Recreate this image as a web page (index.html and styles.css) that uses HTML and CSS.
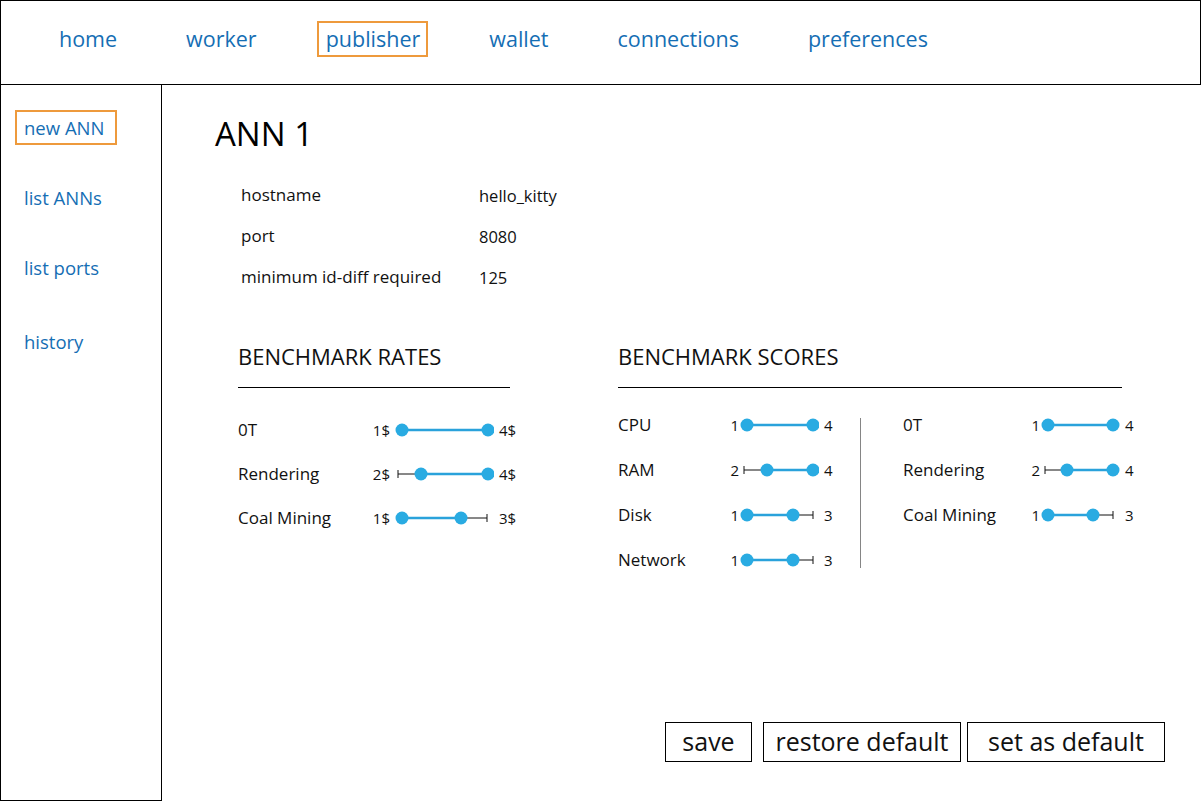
FILE: index.html
```html
<!DOCTYPE html>
<html lang="en">
<head>
<meta charset="utf-8">
<title>Publisher - ANN 1</title>
<link rel="stylesheet" href="styles.css">
</head>
<body>
<header class="topbar">
  <nav class="topnav">
    <a class="nav-item" href="#">home</a>
    <a class="nav-item" href="#">worker</a>
    <a class="nav-item active" href="#">publisher</a>
    <a class="nav-item" href="#">wallet</a>
    <a class="nav-item" href="#">connections</a>
    <a class="nav-item" href="#">preferences</a>
  </nav>
</header>
<div class="main">
  <aside class="sidebar">
    <a class="side-item active" href="#">new ANN</a>
    <a class="side-item" href="#">list ANNs</a>
    <a class="side-item" href="#">list ports</a>
    <a class="side-item side-last" href="#">history</a>
  </aside>
  <main class="content">
    <h1 class="title">ANN 1</h1>
    <dl class="fields">
      <dt>hostname</dt><dd>hello_kitty</dd>
      <dt>port</dt><dd>8080</dd>
      <dt>minimum id-diff required</dt><dd>125</dd>
    </dl>

    <div class="benchmarks">
      <section class="bench rates">
        <h2 class="bench-title">BENCHMARK RATES</h2>
        <div class="rows rate-rows">
          <div class="row">
            <span class="row-label">0T</span>
            <span class="num-lo">1$</span>
            <svg class="range" width="100" height="16" viewBox="0 0 100 16">
              <line class="track" x1="8" y1="8" x2="94" y2="8"/>
              <circle class="dot" cx="8" cy="8" r="6.5"/>
              <circle class="dot" cx="94" cy="8" r="6.5"/>
            </svg>
            <span class="num-hi">4$</span>
          </div>
          <div class="row">
            <span class="row-label">Rendering</span>
            <span class="num-lo">2$</span>
            <svg class="range" width="100" height="16" viewBox="0 0 100 16">
              <line class="limit" x1="4" y1="4" x2="4" y2="12"/>
              <line class="limit" x1="4" y1="8" x2="27" y2="8"/>
              <line class="track" x1="27" y1="8" x2="94" y2="8"/>
              <circle class="dot" cx="27" cy="8" r="6.5"/>
              <circle class="dot" cx="94" cy="8" r="6.5"/>
            </svg>
            <span class="num-hi">4$</span>
          </div>
          <div class="row">
            <span class="row-label">Coal Mining</span>
            <span class="num-lo">1$</span>
            <svg class="range" width="100" height="16" viewBox="0 0 100 16">
              <line class="limit" x1="67" y1="8" x2="93" y2="8"/>
              <line class="limit" x1="93" y1="4" x2="93" y2="12"/>
              <line class="track" x1="8" y1="8" x2="67" y2="8"/>
              <circle class="dot" cx="8" cy="8" r="6.5"/>
              <circle class="dot" cx="67" cy="8" r="6.5"/>
            </svg>
            <span class="num-hi">3$</span>
          </div>
        </div>
      </section>

      <section class="bench scores">
        <h2 class="bench-title">BENCHMARK SCORES</h2>
        <div class="score-cols">
          <div class="rows score-rows score-left">
            <div class="row">
              <span class="row-label">CPU</span>
              <span class="num-lo">1</span>
              <svg class="range" width="80" height="16" viewBox="0 0 80 16">
                <line class="track" x1="8" y1="8" x2="74" y2="8"/>
                <circle class="dot" cx="8" cy="8" r="6.5"/>
                <circle class="dot" cx="74" cy="8" r="6.5"/>
              </svg>
              <span class="num-hi">4</span>
            </div>
            <div class="row">
              <span class="row-label">RAM</span>
              <span class="num-lo">2</span>
              <svg class="range" width="80" height="16" viewBox="0 0 80 16">
                <line class="limit" x1="5" y1="4" x2="5" y2="12"/>
                <line class="limit" x1="5" y1="8" x2="28" y2="8"/>
                <line class="track" x1="28" y1="8" x2="74" y2="8"/>
                <circle class="dot" cx="28" cy="8" r="6.5"/>
                <circle class="dot" cx="74" cy="8" r="6.5"/>
              </svg>
              <span class="num-hi">4</span>
            </div>
            <div class="row">
              <span class="row-label">Disk</span>
              <span class="num-lo">1</span>
              <svg class="range" width="80" height="16" viewBox="0 0 80 16">
                <line class="limit" x1="54" y1="8" x2="74" y2="8"/>
                <line class="limit" x1="74" y1="4" x2="74" y2="12"/>
                <line class="track" x1="8" y1="8" x2="54" y2="8"/>
                <circle class="dot" cx="8" cy="8" r="6.5"/>
                <circle class="dot" cx="54" cy="8" r="6.5"/>
              </svg>
              <span class="num-hi">3</span>
            </div>
            <div class="row">
              <span class="row-label">Network</span>
              <span class="num-lo">1</span>
              <svg class="range" width="80" height="16" viewBox="0 0 80 16">
                <line class="limit" x1="54" y1="8" x2="74" y2="8"/>
                <line class="limit" x1="74" y1="4" x2="74" y2="12"/>
                <line class="track" x1="8" y1="8" x2="54" y2="8"/>
                <circle class="dot" cx="8" cy="8" r="6.5"/>
                <circle class="dot" cx="54" cy="8" r="6.5"/>
              </svg>
              <span class="num-hi">3</span>
            </div>
          </div>
          <div class="divider"></div>
          <div class="rows score-rows score-right">
            <div class="row">
              <span class="row-label">0T</span>
              <span class="num-lo">1</span>
              <svg class="range" width="80" height="16" viewBox="0 0 80 16">
                <line class="track" x1="8" y1="8" x2="73" y2="8"/>
                <circle class="dot" cx="8" cy="8" r="6.5"/>
                <circle class="dot" cx="73" cy="8" r="6.5"/>
              </svg>
              <span class="num-hi">4</span>
            </div>
            <div class="row">
              <span class="row-label">Rendering</span>
              <span class="num-lo">2</span>
              <svg class="range" width="80" height="16" viewBox="0 0 80 16">
                <line class="limit" x1="5" y1="4" x2="5" y2="12"/>
                <line class="limit" x1="5" y1="8" x2="27" y2="8"/>
                <line class="track" x1="27" y1="8" x2="73" y2="8"/>
                <circle class="dot" cx="27" cy="8" r="6.5"/>
                <circle class="dot" cx="73" cy="8" r="6.5"/>
              </svg>
              <span class="num-hi">4</span>
            </div>
            <div class="row">
              <span class="row-label">Coal Mining</span>
              <span class="num-lo">1</span>
              <svg class="range" width="80" height="16" viewBox="0 0 80 16">
                <line class="limit" x1="53" y1="8" x2="73" y2="8"/>
                <line class="limit" x1="73" y1="4" x2="73" y2="12"/>
                <line class="track" x1="8" y1="8" x2="53" y2="8"/>
                <circle class="dot" cx="8" cy="8" r="6.5"/>
                <circle class="dot" cx="53" cy="8" r="6.5"/>
              </svg>
              <span class="num-hi">3</span>
            </div>
          </div>
        </div>
      </section>
    </div>

    <div class="actions">
      <button class="btn btn-save" type="button">save</button>
      <button class="btn btn-wide" type="button">restore default</button>
      <button class="btn btn-wide" type="button">set as default</button>
    </div>
  </main>
</div>
</body>
</html>
```

FILE: styles.css
```css
* {
  box-sizing: border-box;
}

html, body {
  margin: 0;
  padding: 0;
  background: #ffffff;
}

body {
  width: 1201px;
  height: 801px;
  overflow: hidden;
  font-family: "Open Sans", "Noto Sans", sans-serif;
  color: #111111;
  display: flex;
  flex-direction: column;
}

a {
  text-decoration: none;
}

/* ---------- top navigation ---------- */
.topbar {
  height: 85px;
  border: 1px solid #000000;
  flex: none;
}

.topnav {
  display: flex;
  align-items: flex-start;
  gap: 52px;
  padding: 20px 0 0 49px;
}

.nav-item {
  display: block;
  font-size: 21.5px;
  line-height: 32px;
  color: #156eb4;
  border: 2px solid transparent;
  padding: 0 6px 0 7px;
}

.nav-item.active {
  border-color: #ee9a3c;
}

/* ---------- main area ---------- */
.main {
  flex: 1;
  display: flex;
  min-height: 0;
}

.sidebar {
  width: 162px;
  flex: none;
  border-left: 1px solid #000000;
  border-right: 1px solid #000000;
  border-bottom: 1px solid #000000;
  padding: 25px 0 0 14px;
  display: flex;
  flex-direction: column;
  align-items: flex-start;
  gap: 35px;
}

.side-item {
  display: block;
  font-size: 18.5px;
  line-height: 31px;
  color: #156eb4;
  border: 2px solid transparent;
  padding: 0 11px 0 7px;
}

.side-item.active {
  border-color: #ee9a3c;
}

.side-last {
  margin-top: 4px;
}

/* ---------- content ---------- */
.content {
  flex: 1;
  display: flex;
  flex-direction: column;
  padding: 29px 36px 39px 53px;
}

.title {
  margin: 0;
  font-size: 33px;
  line-height: 40px;
  font-weight: 400;
  color: #000000;
}

.fields {
  margin: 20px 0 0 26px;
  display: grid;
  grid-template-columns: 238px auto;
  grid-auto-rows: 41px;
  align-items: center;
}

.fields dt {
  font-size: 17px;
  line-height: 24px;
  color: #111111;
}

.fields dd {
  margin: 0;
  font-size: 16.5px;
  line-height: 24px;
  padding-top: 3px;
  color: #111111;
}

/* ---------- benchmarks ---------- */
.benchmarks {
  display: flex;
  gap: 108px;
  margin: 44px 0 0 23px;
}

.bench-title {
  margin: 0;
  font-size: 22px;
  line-height: 30px;
  font-weight: 400;
  color: #111111;
  padding-bottom: 16px;
  border-bottom: 1px solid #000000;
}

.rates {
  width: 272px;
  flex: none;
}

.scores {
  width: 504px;
  flex: none;
}

.rows {
  display: flex;
  flex-direction: column;
}

.row {
  display: flex;
  align-items: center;
  font-size: 17px;
}

.row-label {
  flex: none;
  line-height: 24px;
}

.num-lo,
.num-hi {
  flex: none;
  font-size: 15px;
  line-height: 20px;
}

.num-lo {
  text-align: right;
}

.range {
  display: block;
  flex: none;
}

.track {
  stroke: #2aa2db;
  stroke-width: 2.5;
}

.dot {
  fill: #29abe2;
}

.limit {
  stroke: #111111;
  stroke-width: 1;
}

/* rates layout */
.rate-rows {
  margin-top: 20px;
}

.rate-rows .row {
  height: 44px;
}

.rate-rows .row-label {
  width: 128px;
}

.rate-rows .num-lo {
  width: 24px;
  margin-right: 4px;
}

.rate-rows .num-hi {
  margin-left: 5px;
}

/* scores layout */
.score-cols {
  display: flex;
  margin-top: 14px;
}

.score-rows {
  flex: none;
}

.score-rows .row {
  height: 45px;
}

.score-rows .row-label {
  width: 107px;
}

.score-rows .num-lo {
  width: 14px;
}

.score-rows .num-hi {
  margin-left: 5px;
}

.score-left {
  width: 242px;
}

.divider {
  flex: none;
  width: 1px;
  background: #858585;
  margin: 16px 0 14px;
}

.score-right {
  padding-left: 42px;
}

.score-right .row-label {
  width: 123px;
}

/* ---------- actions ---------- */
.actions {
  margin-top: auto;
  display: flex;
  justify-content: flex-end;
  gap: 6px;
}

.btn {
  font-family: "Open Sans", "Noto Sans", sans-serif;
  font-size: 25px;
  line-height: 36px;
  height: 40px;
  padding: 0 0 2px;
  border: 1px solid #000000;
  background: #ffffff;
  color: #111111;
  text-align: center;
  border-radius: 0;
}

.btn-save {
  width: 87px;
  margin-right: 5px;
}

.btn-wide {
  width: 198px;
}
```
